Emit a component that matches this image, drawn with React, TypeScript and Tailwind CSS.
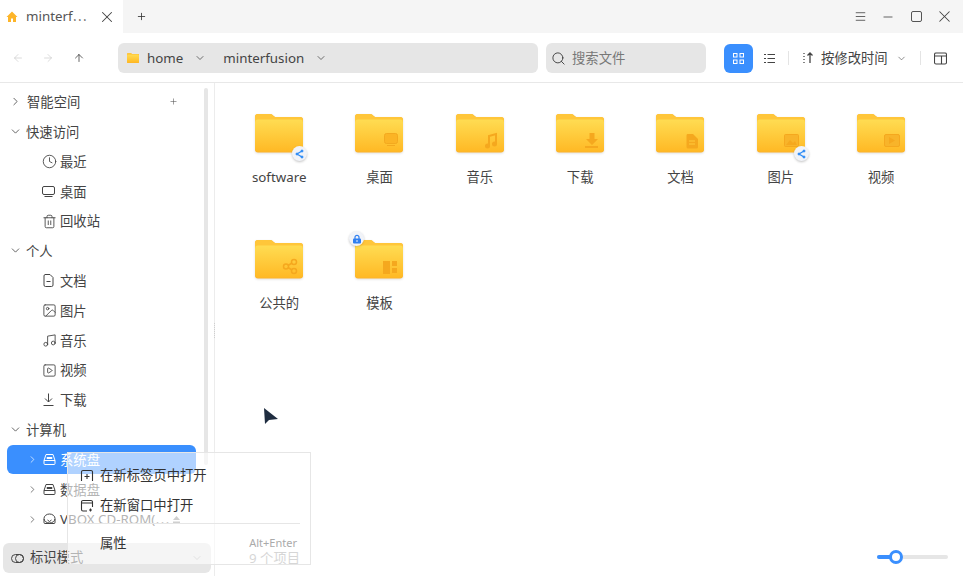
import { useId } from 'react'
import {
  ArrowLeft,
  ArrowRight,
  ArrowUp,
  ChevronDown,
  ChevronRight,
  Clock,
  Image,
  Menu,
  Minus,
  Music,
  Plus,
  Search,
  SquarePlay,
  Trash2,
  X,
} from 'lucide-react'
import { ComponentType } from 'react'

type Mark = 'desktop' | 'music' | 'download' | 'doc' | 'picture' | 'video' | 'share' | 'template'

const FILES: { name: string; mark?: Mark; badge?: 'share' | 'lock' }[] = [
  { name: 'software', badge: 'share' },
  { name: '桌面', mark: 'desktop' },
  { name: '音乐', mark: 'music' },
  { name: '下载', mark: 'download' },
  { name: '文档', mark: 'doc' },
  { name: '图片', mark: 'picture', badge: 'share' },
  { name: '视频', mark: 'video' },
  { name: '公共的', mark: 'share' },
  { name: '模板', mark: 'template', badge: 'lock' },
]

const FolderMark = ({ mark }: { mark: Mark }) => {
  const c = '#f5a81e'
  switch (mark) {
    case 'desktop':
      return (
        <g fill="#fbb425" stroke="#f3a91f" strokeWidth="1">
          <rect x="29.5" y="20.5" width="13" height="10" rx="2" />
          <path d="M32 32.5h8" fill="none" />
        </g>
      )
    case 'music':
      return (
        <g fill="none" stroke={c} strokeWidth="2">
          <path d="M33 33V23l7-2v10" />
          <circle cx="31.5" cy="33" r="1.5" fill={c} />
          <circle cx="38.5" cy="31" r="1.5" fill={c} />
        </g>
      )
    case 'download':
      return (
        <g fill={c}>
          <path d="M33.5 20h5v6h3.5l-6 6-6-6h3.5z" />
          <rect x="29" y="33" width="13" height="2" />
        </g>
      )
    case 'doc':
      return (
        <g>
          <path d="M32 21h5l5 5v8a1.5 1.5 0 0 1-1.5 1.5h-8.500a1.500 1.500 0 0 1-1.500-1.500V22.500a1.500 1.500 0 0 1 1-1.500z" fill={c} />
          <path d="M33 28h6M33 31h6" stroke="#ffc93a" strokeWidth="1.200" />
        </g>
      )
    case 'picture':
      return (
        <g>
          <rect x="27.500" y="21.500" width="14" height="12" rx="1" fill="#f8b42a" stroke={c} />
          <path d="M29 32l4-5 3 3 2-2 2 4z" fill={c} />
        </g>
      )
    case 'video':
      return (
        <g>
          <rect x="27.500" y="21.500" width="15" height="12" rx="1.500" fill="#f8b42a" stroke={c} />
          <path d="M32 24l6 3.500-6 3.500z" fill={c} />
        </g>
      )
    case 'share':
      return (
        <g fill="none" stroke={c} strokeWidth="1.500">
          <circle cx="31" cy="27.500" r="2.500" />
          <circle cx="39" cy="23" r="2.500" />
          <circle cx="39" cy="32" r="2.500" />
          <path d="M33 26.500l4-2.500M33 28.500l4 2.500" />
        </g>
      )
    case 'template':
      return (
        <g fill={c}>
          <rect x="28" y="22" width="7" height="13" />
          <rect x="37" y="22" width="5" height="5" />
          <rect x="37" y="29" width="5" height="5" />
        </g>
      )
  }
}

const Folder = ({ mark, width = 48 }: { mark?: Mark; width?: number }) => {
  const id = useId()
  return (
    <svg width={width} height={(width * 40) / 48} viewBox="0 0 48 40" className="block overflow-visible">
      <defs>
        <linearGradient id={id} x1="0" y1="0" x2="0" y2="1">
          <stop offset="0" stopColor="#ffdc52" />
          <stop offset="1" stopColor="#ffb925" />
        </linearGradient>
      </defs>
      <path d="M3 39.500a3 3 0 0 1-3-3V4a3 3 0 0 1 3-3h12c1.500 0 2 .5 3 1.500L20 4h25a3 3 0 0 1 3 3v29.500a3 3 0 0 1-3 3z" fill="#fdb42a" />
      <path d="M0 8V4a3 3 0 0 1 3-3h12c1.500 0 2 .5 3 1.500L20 4h25a3 3 0 0 1 3 3v1z" fill="#ffc63a" />
      <rect x="0" y="6.500" width="48" height="32" rx="3" fill={`url(#${id})`} />
      {mark && <FolderMark mark={mark} />}
    </svg>
  )
}

const Badge = ({ kind }: { kind: 'share' | 'lock' }) => (
  <span className="flex h-[15px] w-[15px] items-center justify-center rounded-full bg-[#f1f3f8] shadow-sm">
    {kind === 'share' ? (
      <svg width="9" height="10" viewBox="0 0 9 10" fill="#2f8cf5" stroke="#2f8cf5">
        <path d="M7 2L2 5l5 3" fill="none" strokeWidth="1.300" />
        <circle cx="7" cy="2" r="1" />
        <circle cx="2" cy="5" r="1" />
        <circle cx="7" cy="8" r="1" />
      </svg>
    ) : (
      <svg width="10" height="10" viewBox="0 0 10 10">
        <path d="M3 5V3.300a2 2 0 0 1 4 0V5" fill="none" stroke="#2f7ff0" strokeWidth="1.200" />
        <rect x="1" y="4.500" width="8" height="5" rx="1" fill="#2f7ff0" />
        <circle cx="5" cy="7" r="0.800" fill="white" />
      </svg>
    )}
  </span>
)

type IconProps = { size?: number; strokeWidth?: number }

const DriveIcon = ({ cd = false }: { cd?: boolean }) => (
  <svg width="13" height="13" viewBox="0 0 13 13" fill="none" stroke="currentColor" strokeWidth="1">
    {cd ? (
      <>
        <ellipse cx="6.500" cy="5.500" rx="5.500" ry="4.500" />
        <path d="M1 6v3.500a1 1 0 0 0 1 1h9a1 1 0 0 0 1-1V6M4.500 7l2 1.500 2-1.500" />
      </>
    ) : (
      <>
        <path d="M3 1.500h7l2 6v3a1 1 0 0 1-1 1H2a1 1 0 0 1-1-1v-3z" />
        <path d="M1 7.500h11M4 4.500h5v1H4z" />
      </>
    )}
  </svg>
)

const MonitorIcon = (_: IconProps) => (
  <svg width="13" height="13" viewBox="0 0 13 13" fill="none" stroke="currentColor" strokeWidth="1">
    <rect x="0.500" y="1.500" width="12" height="8" rx="1.500" />
    <path d="M2.500 11.500h8" />
  </svg>
)

const DocIcon = (_: IconProps) => (
  <svg width="13" height="13" viewBox="0 0 13 13" fill="none" stroke="currentColor" strokeWidth="1">
    <path d="M3 .5h5l3 3v7.500a1.500 1.500 0 0 1-1.500 1.500h-6A1.500 1.500 0 0 1 2 11V2a1.500 1.500 0 0 1 1-1.500zM4.500 7.500h4" />
  </svg>
)

const DownIcon = (_: IconProps) => (
  <svg width="13" height="13" viewBox="0 0 13 13" fill="none" stroke="currentColor" strokeWidth="1">
    <path d="M6.500 0.500v8.500M3 5.500L6.500 9 10 5.500M1.500 12.500h10" />
  </svg>
)

const SectionRow = ({ label, open = true, action = false }: { label: string; open?: boolean; action?: boolean }) => (
  <div className="flex h-[29.8px] items-center pl-[9px] pr-[18px]">
    {open ? (
      <ChevronDown size={13} strokeWidth={1.5} className="text-[#444]" />
    ) : (
      <ChevronRight size={13} strokeWidth={1.5} className="text-[#444]" />
    )}
    <span className={`mt-[2px] flex-1 ${open ? 'ml-[4px]' : 'ml-[5px]'}`}>{label}</span>
    {action && <Plus size={9} strokeWidth={1.5} className="text-[#555]" />}
  </div>
)

const ItemRow = ({ label, icon: Icon }: { label: string; icon: ComponentType<IconProps> }) => (
  <div className="flex h-[29.8px] items-center pl-[42px]">
    <span className="flex w-[18px] items-center">
      <Icon size={15} strokeWidth={1.4} />
    </span>
    <span className="mt-[2px]">{label}</span>
  </div>
)

const MenuIconTab = () => (
  <svg width="14" height="14" viewBox="0 0 14 14" fill="none" stroke="currentColor" strokeWidth="1.100">
    <path d="M1.500 12V3a1.500 1.500 0 0 1 1.500-1.500h8A1.500 1.500 0 0 1 12.500 3v9M7 5v5M4.500 7.500h5" />
  </svg>
)

const MenuIconWindow = () => (
  <svg width="14" height="14" viewBox="0 0 14 14" fill="none" stroke="currentColor" strokeWidth="1.100">
    <path d="M7 12H3a1.500 1.500 0 0 1-1.500-1.500V3A1.500 1.500 0 0 1 3 1.500h8A1.500 1.500 0 0 1 12.500 3v5M1.500 4h11M10.500 9.500v3M9 11h3" />
  </svg>
)

export default function App() {
  return (
    <div
      className="relative flex h-[576px] w-[963px] flex-col overflow-hidden bg-white text-[13.33px] leading-none text-[#444]"
      style={{ fontFamily: '"Noto Sans", "Noto Sans CJK SC", sans-serif' }}>
      {/* title bar */}
      <div className="flex h-[33px] items-center bg-[#f5f5f5]">
        <div className="flex h-full w-[123px] items-center bg-white pl-[6px]">
          <svg width="12" height="12" viewBox="0 0 12 12" className="text-[#fdb52a]">
            <path d="M6 .5L.5 6H2v5h3V7.500h2V11h3V6h1.500z" fill="currentColor" />
          </svg>
          <span className="ml-[8px] text-[#555]">minterf⋯</span>
          <X size={18} strokeWidth={1.4} className="ml-auto mr-[7px]" />
        </div>
        <Plus size={11} strokeWidth={1.8} className="ml-[13px] text-[#333]" />
        <div className="ml-auto flex items-center pr-[5px] text-[#444]">
          <span className="flex w-[28px] justify-center">
            <Menu size={13} strokeWidth={1.5} />
          </span>
          <span className="flex w-[28px] justify-center">
            <Minus size={14} strokeWidth={1.4} />
          </span>
          <span className="flex w-[28px] justify-center">
            <span className="h-[11px] w-[11px] rounded-[2px] border border-[#555]" />
          </span>
          <span className="flex w-[28px] justify-center">
            <X size={19} strokeWidth={1.3} />
          </span>
        </div>
      </div>

      {/* toolbar */}
      <div className="flex h-[50px] items-center border-b border-[#e8e8e8] pt-px">
        <div className="flex w-[118px] items-center pl-[12px] text-[#c4c4c4]">
          <ArrowLeft size={12} strokeWidth={1.2} />
          <ArrowRight size={12} strokeWidth={1.2} className="ml-[18px]" />
          <ArrowUp size={12} strokeWidth={1.5} className="ml-[19px] text-[#333]" />
        </div>
        <div className="flex h-[30px] w-[420px] items-center rounded-[6px] bg-[#e6e6e6] pl-[9px]">
          <Folder width={12} />
          <span className="ml-[8px] mt-[2px]">home</span>
          <ChevronDown size={12} strokeWidth={1.5} className="ml-[11px]" />
          <span className="ml-[17px] mt-[2px]">minterfusion</span>
          <ChevronDown size={12} strokeWidth={1.5} className="ml-[11px]" />
        </div>
        <div className="ml-[8px] flex h-[30px] w-[160px] items-center rounded-[6px] bg-[#e6e6e6] pl-[5px] text-[#777]">
          <Search size={15} strokeWidth={1.4} className="text-[#333]" />
          <span className="ml-[6px] mt-[2px]">搜索文件</span>
        </div>
        <div className="ml-[18px] flex h-[29px] w-[29px] items-center justify-center rounded-[6px] bg-[#3a8ffe]">
          <svg width="11" height="11" viewBox="0 0 11 11" fill="none" stroke="white">
            <rect x="0.500" y="0.500" width="3.500" height="3.500" />
            <rect x="7" y="0.500" width="3.500" height="3.500" />
            <rect x="0.500" y="7" width="3.500" height="3.500" />
            <rect x="7" y="7" width="3.500" height="3.500" />
          </svg>
        </div>
        <svg width="11" height="11" viewBox="0 0 11 11" fill="none" stroke="#444" className="ml-[11px]">
          <path d="M0 1.500h2M0 5.500h2M0 9.500h2M3.500 1.500H11M3.500 5.500H11M3.500 9.500H11" />
        </svg>
        <span className="ml-[13px] h-[14px] w-px bg-[#e4e4e4]" />
        <svg width="11" height="12" viewBox="0 0 11 12" fill="none" stroke="#444" className="ml-[13px]">
          <path d="M2 1v1M2 4v1M2 7v1M2 10v1M8 11V1M5.500 3.500L8 1l2.500 2.500" strokeWidth="1.300" />
        </svg>
        <span className="ml-[8px] mt-[2px]">按修改时间</span>
        <ChevronDown size={11} strokeWidth={1.3} className="ml-[8px]" />
        <span className="ml-[13px] h-[14px] w-px bg-[#e4e4e4]" />
        <svg width="13" height="13" viewBox="0 0 13 13" fill="none" stroke="#444" strokeWidth="1.100" className="ml-[13px]">
          <rect x="0.500" y="1" width="12" height="11" rx="1.500" />
          <path d="M0.500 4h12M7.500 4v8" />
        </svg>
      </div>

      <div className="flex min-h-0 flex-1">
        {/* sidebar */}
        <aside className="relative flex w-[215px] shrink-0 flex-col border-r border-[#ececec]">
          <div className="flex flex-1 flex-col pt-[4px] pr-[18px]">
            <SectionRow label="智能空间" open={false} action />
            <SectionRow label="快速访问" />
            <ItemRow label="最近" icon={Clock} />
            <ItemRow label="桌面" icon={MonitorIcon} />
            <ItemRow label="回收站" icon={Trash2} />
            <SectionRow label="个人" />
            <ItemRow label="文档" icon={DocIcon} />
            <ItemRow label="图片" icon={Image} />
            <ItemRow label="音乐" icon={Music} />
            <ItemRow label="视频" icon={SquarePlay} />
            <ItemRow label="下载" icon={DownIcon} />
            <SectionRow label="计算机" />
            <div className="ml-[7px] flex h-[29.8px] items-center rounded-[6px] bg-[#3a8ffe] pl-[20px] text-white">
              <ChevronRight size={11} strokeWidth={1.5} />
              <span className="ml-[5px] flex w-[17px]">
                <DriveIcon />
              </span>
              <span className="mt-[2px]">系统盘</span>
            </div>
            <div className="flex h-[29.8px] items-center pl-[27px]">
              <ChevronRight size={11} strokeWidth={1.5} />
              <span className="ml-[5px] flex w-[17px]">
                <DriveIcon />
              </span>
              <span className="mt-[2px]">数据盘</span>
            </div>
            <div className="flex h-[29.8px] items-center pl-[27px]">
              <ChevronRight size={11} strokeWidth={1.5} />
              <span className="ml-[5px] flex w-[17px]">
                <DriveIcon cd />
              </span>
              <span className="mt-[2px]">VBOX CD-ROM(⋯</span>
              <svg width="9" height="9" viewBox="0 0 9 9" className="ml-[3px] text-[#888]" fill="currentColor">
                <path d="M4.500 1L8 5H1zM1 6.500h7V8H1z" />
              </svg>
            </div>
          </div>
          <div className="mb-[3px] ml-[3px] flex h-[30px] w-[208px] items-center rounded-[6px] bg-[#e6e6e6] pl-[8px] pr-[8px]">
            <span className="relative h-[9px] w-[13px] rounded-full border border-[#444]">
              <span className="absolute right-[-1px] top-[-1px] h-[9px] w-[9px] rounded-full border border-[#444]" />
            </span>
            <span className="ml-[6px]">标识模式</span>
            <ChevronDown size={12} strokeWidth={1.3} className="ml-auto text-[#999]" />
          </div>
          {/* overlay scrollbar */}
          <span className="absolute right-[6px] top-[5px] h-[377px] w-[4px] rounded-full bg-[#e6e6e6]" />
          {/* splitter handle */}
          <span className="absolute right-[-1px] top-[240px] h-[15px] border-r border-dotted border-[#cfcfcf]" />
        </aside>

        {/* files */}
        <main className="flex min-w-0 flex-1 flex-col">
          <div className="grid flex-1 grid-cols-[repeat(7,100.33px)] auto-rows-[126px] content-start pl-[14px] pt-[30px]">
            {FILES.map((file) => (
              <div key={file.name} className="flex flex-col items-center">
                <div className="relative drop-shadow-[0_1px_1px_rgba(0,0,0,0.12)]">
                  <Folder mark={file.mark} />
                  {file.badge && (
                    <span className={`absolute ${file.badge === 'lock' ? '-left-[6px] -top-[8px]' : '-right-[4px] -bottom-[8px]'}`}>
                      <Badge kind={file.badge} />
                    </span>
                  )}
                </div>
                <span className="mt-[18px]">{file.name}</span>
              </div>
            ))}
          </div>
          <div className="flex h-[40px] items-start pl-[34px] pr-[15px]">
            <span className="mt-[16px] text-[#999]">9 个项目</span>
            <div className="relative ml-auto mt-[19px] h-[4px] w-[71px] rounded-full bg-[#e6e6e6]">
              <span className="absolute left-0 top-0 h-[4px] w-[20px] rounded-full bg-[#3a8ffe]" />
              <span className="absolute left-[12px] top-[-5px] h-[14px] w-[14px] rounded-full border-[3px] border-[#3a8ffe] bg-white" />
            </div>
          </div>
        </main>
      </div>

      {/* cursor */}
      <svg width="16" height="20" viewBox="0 0 16 20" className="absolute left-[263px] top-[407px]">
        <path d="M1 1l1 16 4-4 9-1z" fill="#1f2d40" />
      </svg>

      {/* fading context menu */}
      <div className="absolute left-[67px] top-[452px] flex h-[113px] w-[244px] flex-col border border-[#e6e6e6] bg-white/60 text-[#333]">
        <div className="mt-[4px] flex h-[30px] shrink-0 items-center pl-[12px] pt-[8px]">
          <MenuIconTab />
          <span className="ml-[6px]">在新标签页中打开</span>
        </div>
        <div className="flex h-[30px] shrink-0 items-center pl-[12px] pt-[8px]">
          <MenuIconWindow />
          <span className="ml-[6px]">在新窗口中打开</span>
        </div>
        <span className="ml-[10px] mr-[10px] mt-[6px] h-px shrink-0 bg-[#e6e6e6]" />
        <div className="flex flex-1 items-start pl-[32px] pr-[13px] pt-[13px]">
          <span>属性</span>
          <span className="ml-auto text-[11px] text-[#aaa]">Alt+Enter</span>
        </div>
      </div>
    </div>
  )
}
